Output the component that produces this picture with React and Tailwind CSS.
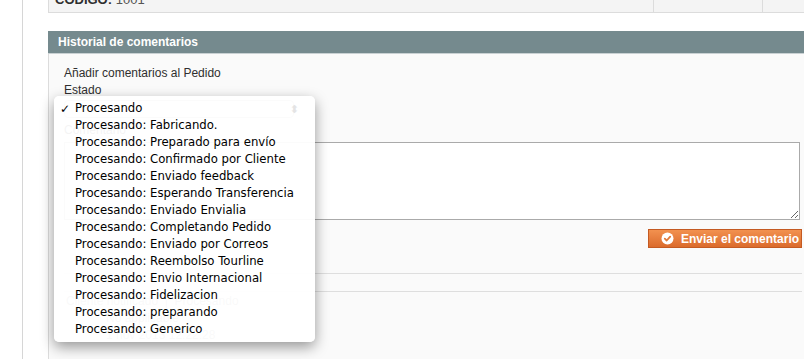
import React from "react";

const options = [
  "Procesando",
  "Procesando: Fabricando.",
  "Procesando: Preparado para envío",
  "Procesando: Confirmado por Cliente",
  "Procesando: Enviado feedback",
  "Procesando: Esperando Transferencia",
  "Procesando: Enviado Envialia",
  "Procesando: Completando Pedido",
  "Procesando: Enviado por Correos",
  "Procesando: Reembolso Tourline",
  "Procesando: Envio Internacional",
  "Procesando: Fidelizacion",
  "Procesando: preparando",
  "Procesando: Generico",
];

const App = () => {
  return (
    <div className="w-[804px] h-[359px] overflow-hidden bg-white relative flex font-['Liberation_Sans',Arial,sans-serif] text-[12px] text-[#2f2f2f]">
      {/* left gutter */}
      <div className="w-[22px] shrink-0" />
      <div className="flex-1 flex border-l border-[#d6d6d6] pl-[25px]">
        <div className="flex-1 flex flex-col">
          {/* top table row, cut off */}
          <div className="h-[13px] flex bg-[#f4f4f4] border-b border-l border-[#dcdcdc] overflow-hidden">
            <div className="w-[604px] px-[6px] leading-[14px] -mt-[7px] text-[13px]">
              <b>CÓDIGO:</b> <span className="text-[#555]">1001</span>
            </div>
            <div className="w-[109px] border-l border-[#dcdcdc]" />
            <div className="flex-1 border-l border-[#dcdcdc]" />
          </div>

          <div className="h-[18px]" />

          {/* header */}
          <div className="h-[23px] bg-[#758a8e] border-b border-[#c9d1d3] flex items-center pl-[10px] text-white font-bold">
            Historial de comentarios
          </div>

          {/* body */}
          <div className="flex-1 bg-[#fafafa] border-l border-[#dcdcdc] pl-[15px] pr-[2px] pt-[11px]">
            <div className="leading-[16px]">Añadir comentarios al Pedido</div>
            <div className="leading-[18px]">Estado</div>
            <div className="h-[18px] w-[230px] mt-[1px] border border-[#aaa] rounded bg-white" />
            <div className="leading-[16px] mt-[4px]">Comentario</div>
            <div className="pr-[2px] mt-[4px]">
              <textarea className="block w-full h-[78px] border border-[#aaa] bg-white outline-none" />
            </div>
            <div className="flex justify-end mt-[9px]">
              <button className="h-[19px] w-[154px] flex items-center gap-[7px] pl-[12px] border border-[#c45a22] bg-gradient-to-b from-[#f2914f] to-[#db6b2c] text-white font-bold text-[12px] leading-none">
                <svg width="13" height="13" viewBox="0 0 13 13">
                  <circle cx="6.5" cy="6.5" r="6" fill="#fff" />
                  <path d="M3.8 6.7 L5.7 8.5 L9.2 4.6" stroke="#e07a3a" strokeWidth="1.8" fill="none" strokeLinecap="round" strokeLinejoin="round" />
                </svg>
                Enviar el comentario
              </button>
            </div>
            <div className="mt-[25px] border-t border-[#dedede]" />
            <div className="mt-[17px] border-t border-[#dedede]" />
            <div className="pl-[2px] pt-[1px] text-[#888] leading-[17px]">
              <div>Cliente notificado &nbsp;|&nbsp; Procesando</div>
              <div className="pl-[40px]">No applicable</div>
              <div className="pl-[40px]">1 nov 2013 12:22:28</div>
            </div>
          </div>
        </div>
      </div>

      {/* open select menu */}
      <div className="absolute left-[54px] top-[96px] w-[261px] h-[246px] bg-white/95 rounded-[5px] shadow-[0_5px_14px_rgba(0,0,0,0.4)] pt-[4px] font-['DejaVu_Sans',sans-serif] text-[11.7px] text-black">
        <span className="absolute right-[16px] top-[6px] text-[#e4e4e4] text-[11px]">⬍</span>
        {options.map((opt, i) => (
          <div key={i} className="h-[17px] flex items-center">
            <span className="w-[21px] pl-[6px] text-[12px]">{i === 0 ? "✓" : ""}</span>
            <span>{opt}</span>
          </div>
        ))}
      </div>
    </div>
  );
};

export default App;
